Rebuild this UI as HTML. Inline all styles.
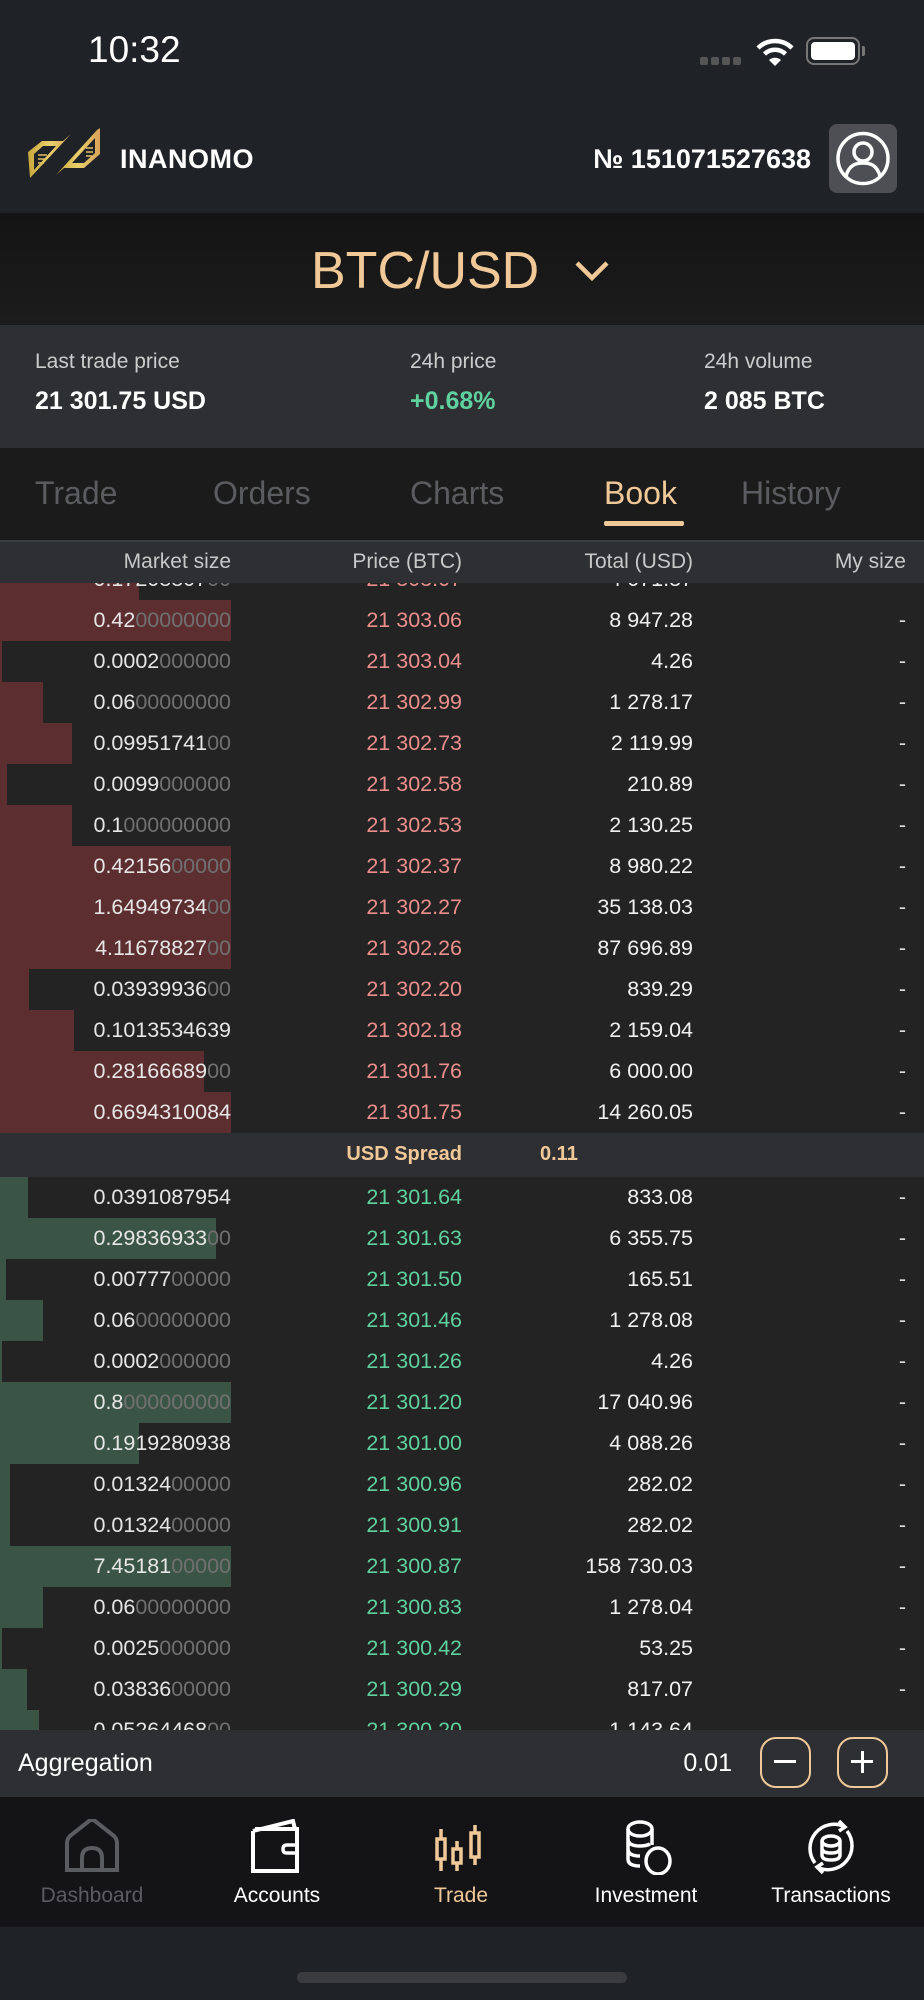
<!DOCTYPE html>
<html><head><meta charset="utf-8">
<style>
*{margin:0;padding:0;box-sizing:border-box}
body{width:924px;height:2000px;background:#1f2227;font-family:"Liberation Sans",sans-serif;position:relative;overflow:hidden;color:#fff}
.abs{position:absolute}
.top{left:0;top:0;width:924px;height:213px;background:#1f2227}
.pair{left:0;top:213px;width:924px;height:112px;background:linear-gradient(#141414,#1c1c1c)}
.stats{left:0;top:325px;width:924px;height:123px;background:#2e2f33}
.tabs{left:0;top:448px;width:924px;height:92px;background:#1b1b1b}
.colh{left:0;top:540px;width:924px;height:43px;background:#2e2f33;border-top:2px solid #3c3d42;font-size:21px;color:#c8c8c8}
.colh span{position:absolute;top:8px}
.book{left:0;top:583px;width:924px;height:1147px;background:#232323;overflow:hidden}
.inner{position:absolute;left:0;top:-24px;width:924px}
.r{position:relative;height:41px;font-size:21.5px}
.r .b{position:absolute;left:0;top:0;height:41px}
.rd .b{background:#5d2e30}
.gn .b{background:#3a5545}
.r span{position:absolute;top:8px;white-space:nowrap}
.s{right:693px;color:#e6e6e6}
.s i{font-style:normal;color:#707070}
.p{right:462px}
.rd .p{color:#ec8e8c}
.gn .p{color:#5fd19f}
.t{right:231px;color:#f0f0f0}
.m{right:18px;color:#ddd}
.spread{height:44px;background:#2e2f33;position:relative;font-size:20px;font-weight:bold;color:#f1c999}
.agg{left:0;top:1730px;width:924px;height:67px;background:#2e2f33}
.nav{left:0;top:1797px;width:924px;height:130px;background:#141416}
.nav .it{position:absolute;top:0;width:184px;text-align:center;font-size:21px}
.nav .it svg{display:block;margin:22px auto 0}
.nav .it div{margin-top:9px}
.btn{position:absolute;top:7px;width:51px;height:51px;border:2.5px solid #f1c999;border-radius:16px}
</style></head><body>
<div class="abs top">
 <div class="abs" style="left:88px;top:29px;font-size:37px;font-weight:500;color:#fff">10:32</div>
 <div class="abs" style="left:700px;top:57px;width:42px;height:8px;display:flex;gap:3px"><b style="width:8px;height:8px;background:#555;border-radius:2px"></b><b style="width:8px;height:8px;background:#555;border-radius:2px"></b><b style="width:8px;height:8px;background:#555;border-radius:2px"></b><b style="width:8px;height:8px;background:#555;border-radius:2px"></b></div>
 <svg class="abs" style="left:755px;top:37px" width="40" height="30" viewBox="0 0 40 30"><path d="M3 11 A24 24 0 0 1 37 11" stroke="#fff" stroke-width="4.5" fill="none"/><path d="M9.5 17 A15 15 0 0 1 30.5 17" stroke="#fff" stroke-width="4.5" fill="none"/><path d="M14 23 L20 29 L26 23 A9 9 0 0 0 14 23Z" fill="#fff"/></svg>
 <div class="abs" style="left:806px;top:37px;width:54px;height:28px;border:2px solid #777;border-radius:8px;padding:3px"><div style="background:#fff;height:100%;border-radius:4px"></div></div>
 <div class="abs" style="left:862px;top:46px;width:3px;height:10px;background:#777;border-radius:0 2px 2px 0"></div>
 <svg class="abs" style="left:26px;top:126px" width="76" height="56" viewBox="0 0 76 56"><defs><linearGradient id="g" x1="0" x2="1"><stop offset="0" stop-color="#c9a63a"/><stop offset="0.5" stop-color="#e9d06a"/><stop offset="1" stop-color="#d7a35a"/></linearGradient></defs>
 <path d="M2 26 L16 15 L37 15 L45 8 L4 52 Z M8 28 L8 44 L30 20 L17 20 Z" fill="url(#g)" fill-rule="evenodd"/>
 <path d="M74 2 L74 28 L58 42 L38 42 L30 49 L71 4 Z M69 12 L46 37 L58 37 L69 27 Z" fill="url(#g)" fill-rule="evenodd"/>
 <path d="M12 29h9M12 33h8M12 37h6M60 22h7M60 26h7M60 30h6" stroke="#e0c060" stroke-width="1.5"/></svg>
 <div class="abs" style="left:120px;top:144px;font-size:27px;font-weight:bold;color:#fff;letter-spacing:0.5px">INANOMO</div>
 <div class="abs" style="right:113px;top:144px;font-size:27px;font-weight:bold;color:#fff">№ 151071527638</div>
 <div class="abs" style="left:829px;top:124px;width:68px;height:69px;background:#4d4f54;border-radius:8px">
  <svg width="68" height="69" viewBox="0 0 68 69"><circle cx="34" cy="34.5" r="25" fill="none" stroke="#fff" stroke-width="3.5"/><circle cx="34" cy="28" r="9" fill="none" stroke="#fff" stroke-width="3.5"/><path d="M17 52 C20 41 27 39 34 39 C41 39 48 41 51 52" fill="none" stroke="#fff" stroke-width="3.5"/></svg>
 </div>
</div>
<div class="abs pair">
 <div class="abs" style="left:311px;top:28px;font-size:52px;color:#f1c999">BTC/USD</div>
 <svg class="abs" style="left:572px;top:45px" width="40" height="26" viewBox="0 0 40 26"><path d="M5 5 L20 20 L35 5" stroke="#f1c999" stroke-width="4.5" fill="none"/></svg>
</div>
<div class="abs stats">
 <div class="abs" style="left:35px;top:25px;font-size:21px;color:#ccc">Last trade price</div>
 <div class="abs" style="left:35px;top:62px;font-size:25px;font-weight:bold">21 301.75 USD</div>
 <div class="abs" style="left:410px;top:25px;font-size:21px;color:#ccc">24h price</div>
 <div class="abs" style="left:410px;top:62px;font-size:25px;font-weight:bold;color:#5fd19f">+0.68%</div>
 <div class="abs" style="left:704px;top:25px;font-size:21px;color:#ccc">24h volume</div>
 <div class="abs" style="left:704px;top:62px;font-size:25px;font-weight:bold">2 085 BTC</div>
</div>
<div class="abs tabs" style="font-size:32px;color:#5b5c60">
 <div class="abs" style="left:35px;top:27px">Trade</div>
 <div class="abs" style="left:213px;top:27px">Orders</div>
 <div class="abs" style="left:410px;top:27px">Charts</div>
 <div class="abs" style="left:604px;top:27px;color:#f1c999">Book</div>
 <div class="abs" style="left:741px;top:27px">History</div>
 <div class="abs" style="left:604px;top:73px;width:80px;height:5px;background:#f1c999;border-radius:2px"></div>
</div>
<div class="abs colh">
 <span style="right:693px">Market size</span><span style="right:462px">Price (BTC)</span><span style="right:231px">Total (USD)</span><span style="right:18px">My size</span>
</div>
<div class="abs book"><div class="inner">
<div class="r rd"><div class="b" style="width:139px"></div><span class="s">0.17208807<i>00</i></span><span class="p">21 303.07</span><span class="t">4 071.87</span><span class="m">-</span></div>
<div class="r rd"><div class="b" style="width:231px"></div><span class="s">0.42<i>00000000</i></span><span class="p">21 303.06</span><span class="t">8 947.28</span><span class="m">-</span></div>
<div class="r rd"><div class="b" style="width:2px"></div><span class="s">0.0002<i>000000</i></span><span class="p">21 303.04</span><span class="t">4.26</span><span class="m">-</span></div>
<div class="r rd"><div class="b" style="width:43px"></div><span class="s">0.06<i>00000000</i></span><span class="p">21 302.99</span><span class="t">1 278.17</span><span class="m">-</span></div>
<div class="r rd"><div class="b" style="width:72px"></div><span class="s">0.09951741<i>00</i></span><span class="p">21 302.73</span><span class="t">2 119.99</span><span class="m">-</span></div>
<div class="r rd"><div class="b" style="width:7px"></div><span class="s">0.0099<i>000000</i></span><span class="p">21 302.58</span><span class="t">210.89</span><span class="m">-</span></div>
<div class="r rd"><div class="b" style="width:72px"></div><span class="s">0.1<i>000000000</i></span><span class="p">21 302.53</span><span class="t">2 130.25</span><span class="m">-</span></div>
<div class="r rd"><div class="b" style="width:231px"></div><span class="s">0.42156<i>00000</i></span><span class="p">21 302.37</span><span class="t">8 980.22</span><span class="m">-</span></div>
<div class="r rd"><div class="b" style="width:231px"></div><span class="s">1.64949734<i>00</i></span><span class="p">21 302.27</span><span class="t">35 138.03</span><span class="m">-</span></div>
<div class="r rd"><div class="b" style="width:231px"></div><span class="s">4.11678827<i>00</i></span><span class="p">21 302.26</span><span class="t">87 696.89</span><span class="m">-</span></div>
<div class="r rd"><div class="b" style="width:29px"></div><span class="s">0.03939936<i>00</i></span><span class="p">21 302.20</span><span class="t">839.29</span><span class="m">-</span></div>
<div class="r rd"><div class="b" style="width:74px"></div><span class="s">0.1013534639</span><span class="p">21 302.18</span><span class="t">2 159.04</span><span class="m">-</span></div>
<div class="r rd"><div class="b" style="width:204px"></div><span class="s">0.28166689<i>00</i></span><span class="p">21 301.76</span><span class="t">6 000.00</span><span class="m">-</span></div>
<div class="r rd"><div class="b" style="width:231px"></div><span class="s">0.6694310084</span><span class="p">21 301.75</span><span class="t">14 260.05</span><span class="m">-</span></div>
<div class="spread"><span class="abs" style="right:462px;top:10px">USD Spread</span><span class="abs" style="left:540px;top:10px">0.11</span></div>
<div class="r gn"><div class="b" style="width:28px"></div><span class="s">0.0391087954</span><span class="p">21 301.64</span><span class="t">833.08</span><span class="m">-</span></div>
<div class="r gn"><div class="b" style="width:216px"></div><span class="s">0.29836933<i>00</i></span><span class="p">21 301.63</span><span class="t">6 355.75</span><span class="m">-</span></div>
<div class="r gn"><div class="b" style="width:6px"></div><span class="s">0.00777<i>00000</i></span><span class="p">21 301.50</span><span class="t">165.51</span><span class="m">-</span></div>
<div class="r gn"><div class="b" style="width:43px"></div><span class="s">0.06<i>00000000</i></span><span class="p">21 301.46</span><span class="t">1 278.08</span><span class="m">-</span></div>
<div class="r gn"><div class="b" style="width:2px"></div><span class="s">0.0002<i>000000</i></span><span class="p">21 301.26</span><span class="t">4.26</span><span class="m">-</span></div>
<div class="r gn"><div class="b" style="width:231px"></div><span class="s">0.8<i>000000000</i></span><span class="p">21 301.20</span><span class="t">17 040.96</span><span class="m">-</span></div>
<div class="r gn"><div class="b" style="width:139px"></div><span class="s">0.1919280938</span><span class="p">21 301.00</span><span class="t">4 088.26</span><span class="m">-</span></div>
<div class="r gn"><div class="b" style="width:10px"></div><span class="s">0.01324<i>00000</i></span><span class="p">21 300.96</span><span class="t">282.02</span><span class="m">-</span></div>
<div class="r gn"><div class="b" style="width:10px"></div><span class="s">0.01324<i>00000</i></span><span class="p">21 300.91</span><span class="t">282.02</span><span class="m">-</span></div>
<div class="r gn"><div class="b" style="width:231px"></div><span class="s">7.45181<i>00000</i></span><span class="p">21 300.87</span><span class="t">158 730.03</span><span class="m">-</span></div>
<div class="r gn"><div class="b" style="width:43px"></div><span class="s">0.06<i>00000000</i></span><span class="p">21 300.83</span><span class="t">1 278.04</span><span class="m">-</span></div>
<div class="r gn"><div class="b" style="width:2px"></div><span class="s">0.0025<i>000000</i></span><span class="p">21 300.42</span><span class="t">53.25</span><span class="m">-</span></div>
<div class="r gn"><div class="b" style="width:27px"></div><span class="s">0.03836<i>00000</i></span><span class="p">21 300.29</span><span class="t">817.07</span><span class="m">-</span></div>
<div class="r gn"><div class="b" style="width:39px"></div><span class="s">0.05264468<i>00</i></span><span class="p">21 300.20</span><span class="t">1 143.64</span><span class="m">-</span></div>
</div></div>
<div class="abs agg">
 <div class="abs" style="left:18px;top:19px;font-size:25px;color:#fff">Aggregation</div>
 <div class="abs" style="right:192px;top:19px;font-size:25px;color:#fff">0.01</div>
 <div class="btn" style="left:760px"><div class="abs" style="left:12px;top:21px;width:22px;height:3px;background:#fff"></div></div>
 <div class="btn" style="left:837px"><div class="abs" style="left:12px;top:21px;width:22px;height:3px;background:#fff"></div><div class="abs" style="left:21.5px;top:12px;width:3px;height:22px;background:#fff"></div></div>
</div>
<div class="abs nav">
 <div class="it" style="left:0;color:#5b5c60"><svg width="56" height="56" viewBox="0 0 56 56"><path d="M3 51 L3 24 Q3 20 6 17 L25 2 Q28 0 31 2 L50 17 Q53 20 53 24 L53 51 Z" fill="none" stroke="#5b5c60" stroke-width="4"/><path d="M18 51 L18 39 Q18 29 28 29 Q38 29 38 39 L38 51" fill="none" stroke="#5b5c60" stroke-width="4"/></svg><div>Dashboard</div></div>
 <div class="it" style="left:185px"><svg width="56" height="56" viewBox="0 0 56 56"><path d="M4 12 L4 52 L48 52 L48 10 L6 10" fill="none" stroke="#fff" stroke-width="4"/><path d="M4 12 L44 2 L46 10" fill="none" stroke="#fff" stroke-width="4"/><path d="M48 26 L38 26 Q34 26 34 30 Q34 34 38 34 L48 34" fill="none" stroke="#fff" stroke-width="3.5"/></svg><div>Accounts</div></div>
 <div class="it" style="left:369px;color:#f1c999"><svg width="56" height="56" viewBox="0 0 56 56" stroke="#f1c999" stroke-width="3.5" fill="none"><path d="M8 10V52M24 22V52M42 6V46"/><rect x="4" y="20" width="8" height="20" fill="#141416"/><rect x="20" y="30" width="8" height="14" fill="#141416"/><rect x="38" y="14" width="8" height="24" fill="#141416"/></svg><div>Trade</div></div>
 <div class="it" style="left:554px"><svg width="56" height="56" viewBox="0 0 56 56" stroke="#fff" stroke-width="3.5" fill="none"><ellipse cx="22" cy="10" rx="12" ry="7"/><path d="M10 10V40Q10 47 22 47M10 20Q10 27 22 27Q28 27 32 25M10 30Q10 37 22 37"/><path d="M34 10V26"/><ellipse cx="40" cy="42" rx="12" ry="13" fill="#141416"/></svg><div>Investment</div></div>
 <div class="it" style="left:739px"><svg width="56" height="56" viewBox="0 0 56 56" stroke="#fff" stroke-width="3.5" fill="none"><path d="M12 44A24 24 0 0 1 42 8M44 12A24 24 0 0 1 14 48"/><path d="M36 2L42 8L36 12M20 44L14 48L20 54"/><ellipse cx="28" cy="22" rx="9" ry="5"/><path d="M19 22V36Q19 41 28 41Q37 41 37 36V22M19 29Q19 34 28 34Q37 34 37 29"/></svg><div>Transactions</div></div>
</div>
<div class="abs" style="left:297px;top:1972px;width:330px;height:11px;background:#3a3b3f;border-radius:6px"></div>
</body></html>
